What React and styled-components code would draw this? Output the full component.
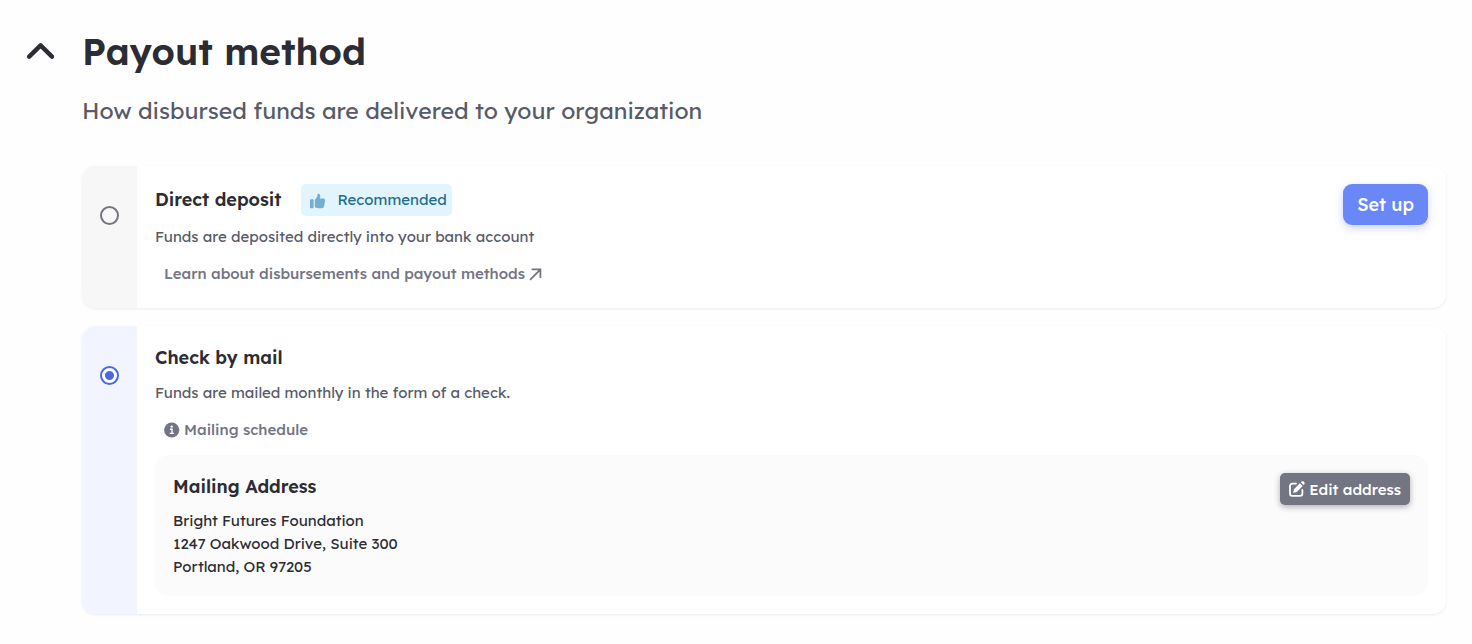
import React, { useState } from "react";
import styled, { createGlobalStyle } from "styled-components";

const GlobalStyle = createGlobalStyle`
  *, *::before, *::after { box-sizing: border-box; }
  body {
    margin: 0;
    background: #fefefe;
    color: #2b2c34;
    font-family: Lexend, Inter, "Liberation Sans", sans-serif;
    font-size: 15px;
    line-height: 24px;
  }
  h1, h2, h3, p, address { margin: 0; font-style: normal; }
  button { font-family: inherit; cursor: pointer; }
`;

const Section = styled.section`
  display: grid;
  grid-template-columns: 28px minmax(0, 1fr);
  column-gap: 28px;
  padding: 27px 26px;
`;

const Toggle = styled.button`
  display: flex;
  align-items: center;
  justify-content: center;
  height: 48px;
  padding: 0;
  border: 0;
  background: none;
  color: #2b2c34;
`;

const Title = styled.h1`
  font-size: 37px;
  font-weight: 600;
  line-height: 48px;
`;

const Content = styled.div`
  grid-column: 2;
`;

const Subtitle = styled.p`
  margin-top: 20px;
  color: #575a69;
  font-size: 23px;
  line-height: 32px;
`;

const Options = styled.div`
  display: flex;
  flex-direction: column;
  gap: 18px;
  margin-top: 39px;
`;

const Card = styled.article`
  display: grid;
  grid-template-columns: 55px minmax(0, 1fr);
  overflow: hidden;
  border-radius: 14px;
  background: #fff;
  box-shadow: 0 1px 3px rgba(0, 0, 0, 0.08);
`;

const Rail = styled.div`
  display: flex;
  justify-content: center;
  padding-top: 40px;
  background: ${(p) => (p.$selected ? "#f2f5ff" : "#f7f7f7")};
`;

const Radio = styled.input`
  appearance: none;
  width: 19px;
  height: 19px;
  margin: 0;
  border: 2px solid ${(p) => (p.checked ? "#4c67e3" : "#737583")};
  border-radius: 50%;
  background: ${(p) =>
    p.checked ? "radial-gradient(circle, #4c67e3 4px, #fff 5px)" : "transparent"};
`;

const Body = styled.div`
  display: flex;
  align-items: flex-start;
  justify-content: space-between;
  flex-wrap: ${(p) => (p.$stacked ? "wrap" : "nowrap")};
  row-gap: 9px;
  padding: 18px;
`;

const Details = styled.div`
  display: flex;
  flex-direction: column;
  align-items: flex-start;
  gap: ${(p) => (p.$compact ? "8px" : "9px")};
`;

const TitleRow = styled.div`
  display: flex;
  align-items: center;
  gap: 20px;
`;

const Heading = styled.label`
  font-size: 18px;
  font-weight: 600;
  line-height: 28px;
`;

const PanelHeading = styled.h2`
  font-size: 18px;
  font-weight: 600;
  line-height: 28px;
`;

const Badge = styled.span`
  display: flex;
  align-items: center;
  gap: 11px;
  height: 32px;
  padding: 0 5px 0 8px;
  border-radius: 5px;
  background: #e2f5fe;
  color: #236d8b;

  svg { color: #77aed0; }
`;

const Description = styled.p`
  color: #575a69;
`;

const TextLink = styled.a`
  display: flex;
  align-items: center;
  gap: 4px;
  height: 32px;
  padding: 0 9px;
  color: #737583;
  font-weight: 500;
  text-decoration: none;
`;

const SetUpButton = styled.button`
  flex: none;
  height: 41px;
  padding: 0 14px;
  border: 0;
  border-radius: 9px;
  background: #6987f7;
  box-shadow: 0 3px 8px rgba(76, 103, 227, 0.3);
  color: #fff;
  font-size: 18px;
  font-weight: 500;
`;

const AddressPanel = styled.div`
  display: flex;
  align-items: flex-start;
  justify-content: space-between;
  width: 100%;
  padding: 18px;
  border-radius: 14px;
  background: #fbfbfb;
`;

const Address = styled.address`
  line-height: 23px;
`;

const EditButton = styled.button`
  display: flex;
  align-items: center;
  gap: 4px;
  height: 32px;
  padding: 0 9px;
  border: 0;
  border-radius: 5px;
  background: #737583;
  box-shadow: 0 2px 6px rgba(0, 0, 0, 0.3);
  color: #fff;
  font-size: 15px;
  font-weight: 500;
`;

const ChevronIcon = () => (
  <svg width="28" height="18" viewBox="0 0 28 18" fill="none" stroke="currentColor" strokeWidth="4.4" strokeLinecap="round" strokeLinejoin="round" aria-hidden="true">
    <path d="M3.2 14.6 14.6 3.4 26 14.6" />
  </svg>
);

const ThumbIcon = () => (
  <svg width="17" height="17" viewBox="0 0 17 17" fill="currentColor" aria-hidden="true">
    <rect x="1" y="7.2" width="3.6" height="9" rx="1" />
    <path d="M5.8 8 8.3 4.6V3C8.3 2.1 8.9 1.6 9.7 1.8 11.2 2.1 11.5 3.7 11.2 5L10.9 6.4h3.2c1.5 0 2.2.9 2 2.1l-1 5.7c-.3 1.3-1.1 2-2.4 2H9.6c-1.6 0-2.6-.4-3.8-1.2Z" />
  </svg>
);

const ArrowIcon = () => (
  <svg width="13" height="13" viewBox="0 0 13 13" fill="none" stroke="currentColor" strokeWidth="1.8" aria-hidden="true">
    <path d="M1 11.8 11 1.8M2.6 1.3h8.8V10" />
  </svg>
);

const InfoIcon = () => (
  <svg width="16" height="16" viewBox="0 0 16 16" aria-hidden="true">
    <circle cx="7.7" cy="8" r="7.6" fill="currentColor" />
    <circle cx="7.7" cy="4.6" r="1.2" fill="#fff" />
    <path d="M6 7.3h2v4M5.7 11.4h4.2" fill="none" stroke="#fff" strokeWidth="1.4" />
  </svg>
);

const EditIcon = () => (
  <svg width="16" height="16" viewBox="0 0 16 16" aria-hidden="true">
    <path d="M7 2.6H3.4A2.4 2.4 0 0 0 1 5v7.4a2.4 2.4 0 0 0 2.4 2.4H11a2.4 2.4 0 0 0 2.4-2.4V9" fill="none" stroke="currentColor" strokeWidth="1.8" strokeLinecap="round" />
    <path d="m10.8 2.2 2.9 2.9-6 5.9-3.6.9.9-3.6ZM11.8 1.3l.7-.7c1.8-1.2 4 1 2.8 2.8l-.7.7Z" fill="currentColor" />
  </svg>
);

export default function App() {
  const [method, setMethod] = useState("check");
  const [open, setOpen] = useState(true);

  return (
    <>
      <GlobalStyle />
      <Section>
        <Toggle aria-label="Toggle payout method" aria-expanded={open} onClick={() => setOpen(!open)}>
          <ChevronIcon />
        </Toggle>
        <Title>Payout method</Title>
        {open && (
          <Content>
            <Subtitle>How disbursed funds are delivered to your organization</Subtitle>
            <Options>
              <Card>
                <Rail $selected={method === "deposit"}>
                  <Radio type="radio" id="deposit" name="method" checked={method === "deposit"} onChange={() => setMethod("deposit")} />
                </Rail>
                <Body>
                  <Details>
                    <TitleRow>
                      <Heading htmlFor="deposit">Direct deposit</Heading>
                      <Badge><ThumbIcon />Recommended</Badge>
                    </TitleRow>
                    <Description>Funds are deposited directly into your bank account</Description>
                    <TextLink href="#payouts">Learn about disbursements and payout methods<ArrowIcon /></TextLink>
                  </Details>
                  <SetUpButton>Set up</SetUpButton>
                </Body>
              </Card>
              <Card>
                <Rail $selected={method === "check"}>
                  <Radio type="radio" id="check" name="method" checked={method === "check"} onChange={() => setMethod("check")} />
                </Rail>
                <Body $stacked>
                  <Details>
                    <Heading htmlFor="check">Check by mail</Heading>
                    <Description>Funds are mailed monthly in the form of a check.</Description>
                    <TextLink href="#schedule"><InfoIcon />Mailing schedule</TextLink>
                  </Details>
                  <AddressPanel>
                    <Details $compact>
                      <PanelHeading>Mailing Address</PanelHeading>
                      <Address>
                        Bright Futures Foundation<br />
                        1247 Oakwood Drive, Suite 300<br />
                        Portland, OR 97205
                      </Address>
                    </Details>
                    <EditButton><EditIcon />Edit address</EditButton>
                  </AddressPanel>
                </Body>
              </Card>
            </Options>
          </Content>
        )}
      </Section>
    </>
  );
}
